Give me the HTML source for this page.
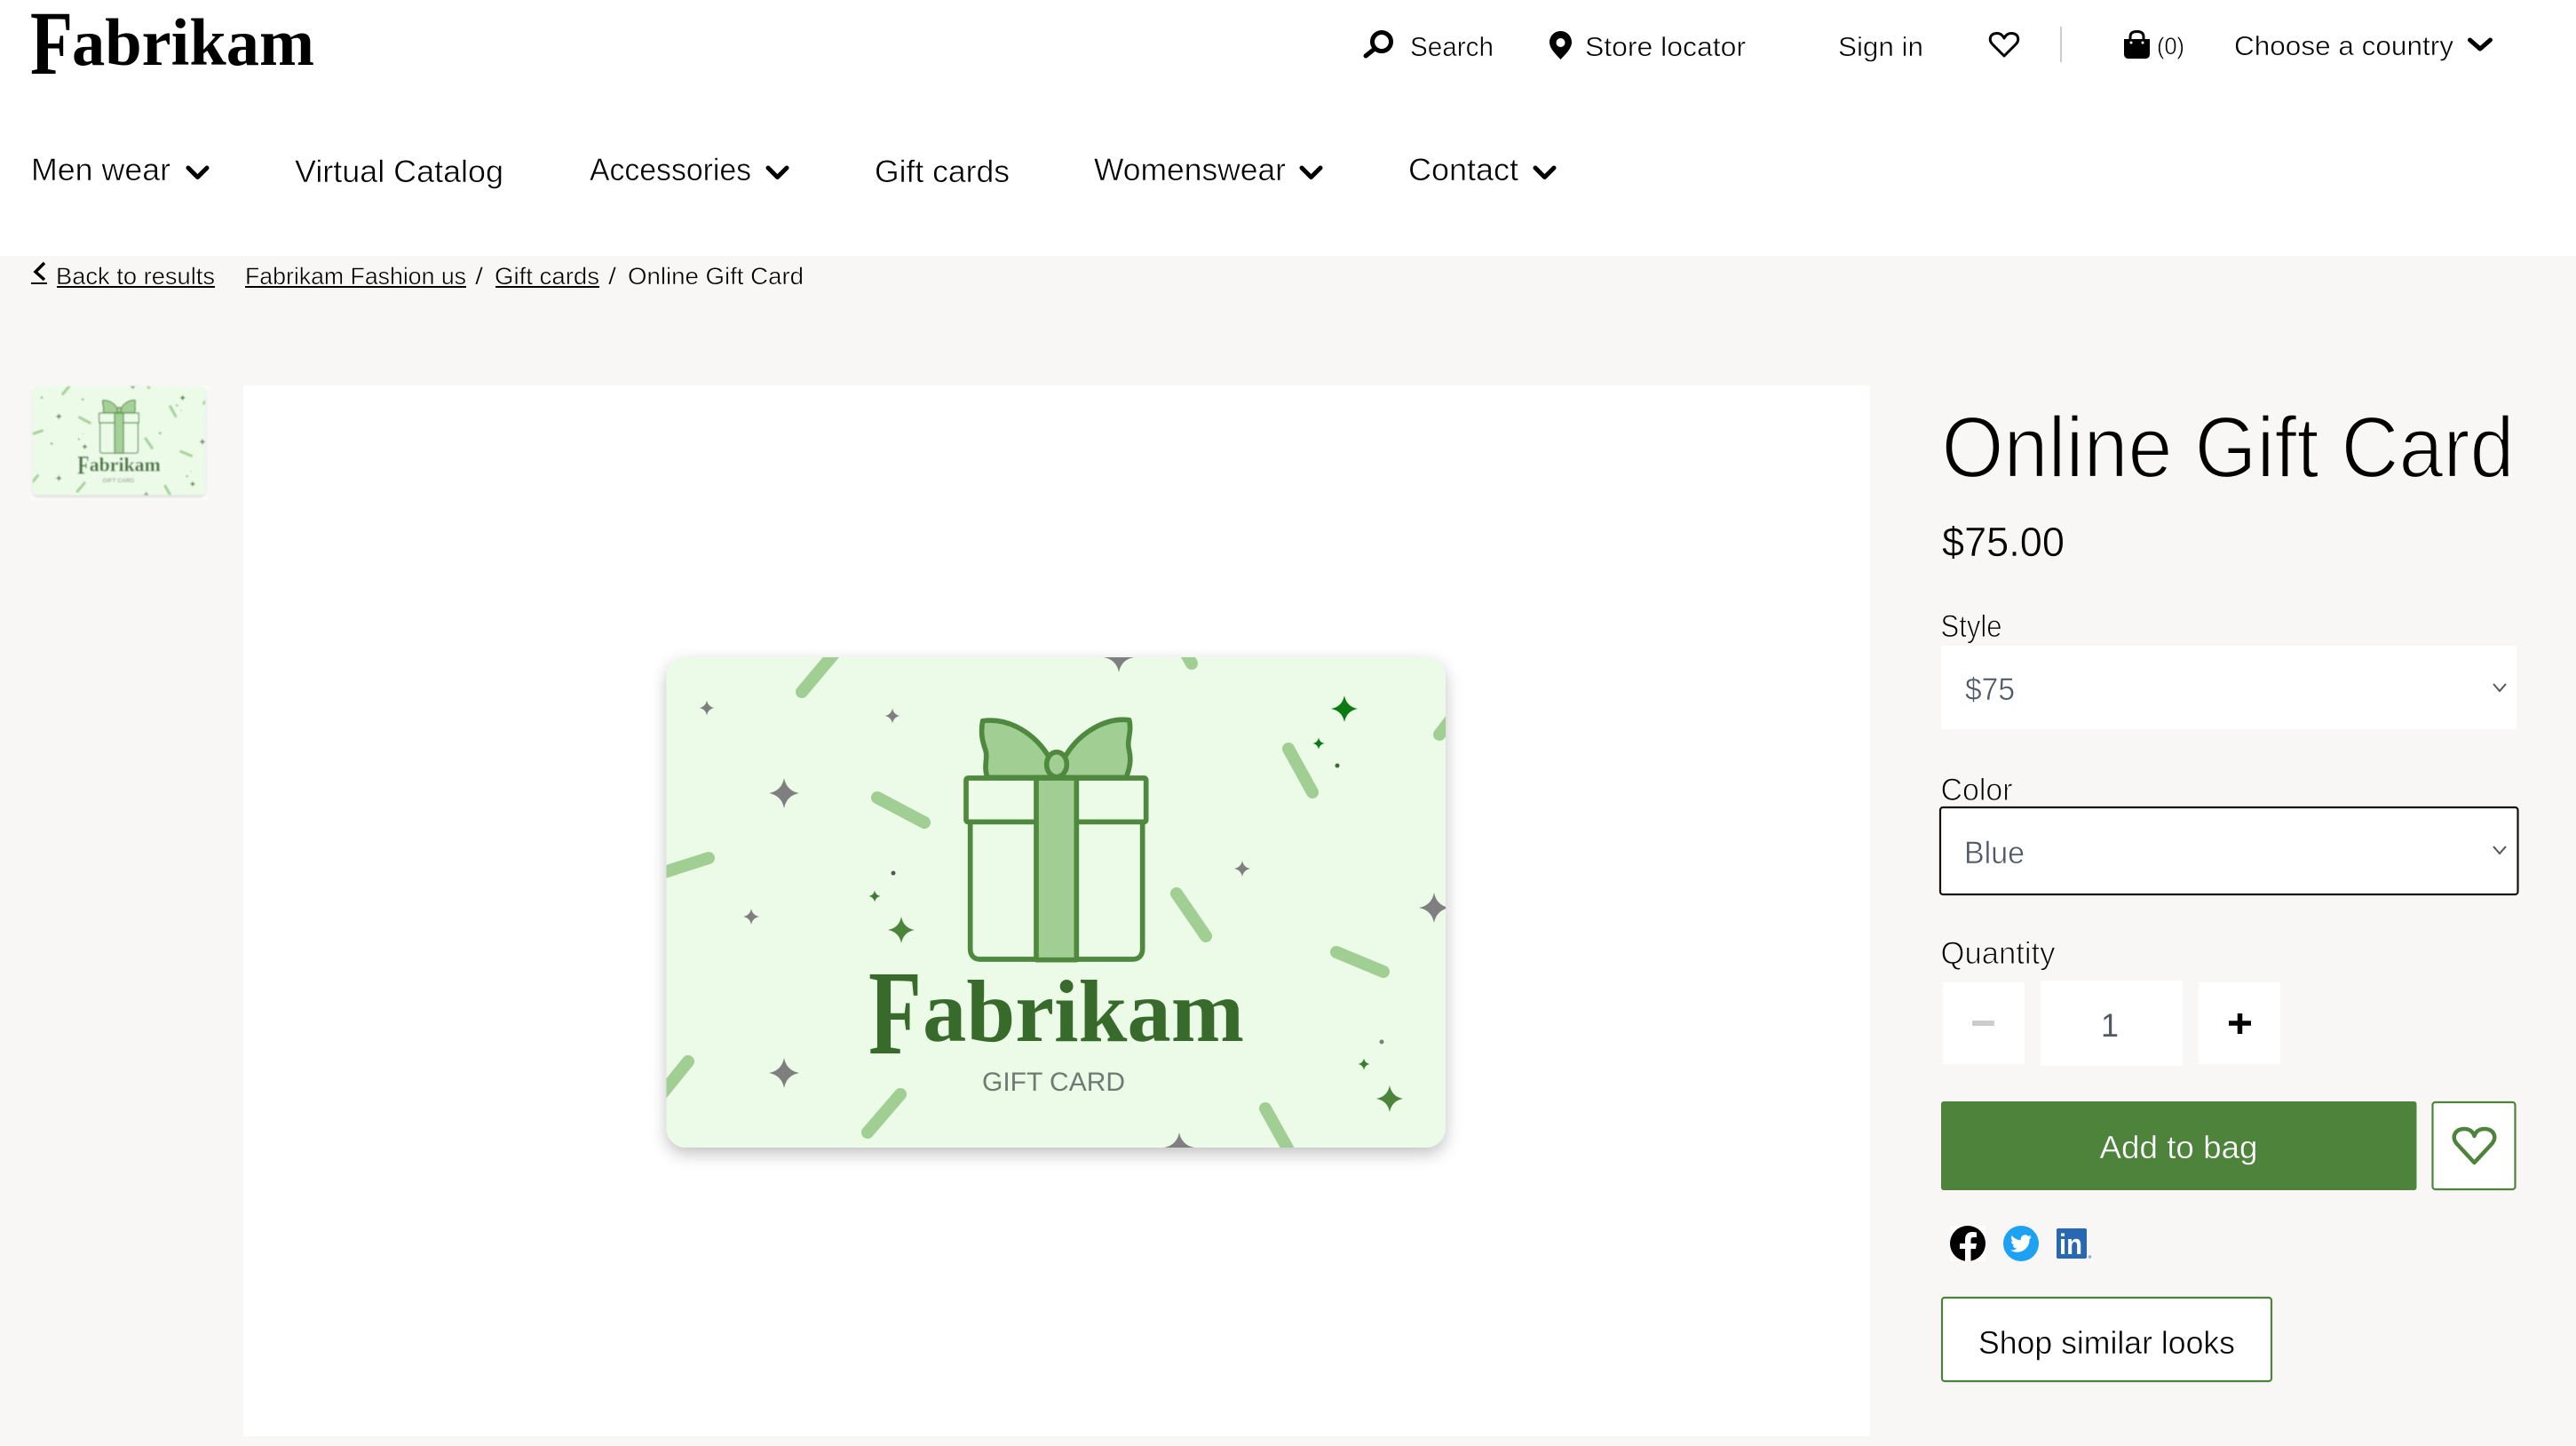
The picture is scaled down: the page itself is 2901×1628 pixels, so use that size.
<!DOCTYPE html>
<html lang="en"><head><meta charset="utf-8"><title>Online Gift Card</title>
<style>
html,body{margin:0;padding:0;background:#fff;width:2901px;height:1628px;overflow:hidden}
svg{display:block}
text{font-family:"Liberation Sans",Arial,sans-serif;fill:#000;white-space:pre}
.w{stroke:#fff;stroke-width:.55}
.b{stroke:#f8f7f6;stroke-width:.5}
.bl{stroke:#f8f7f6;stroke-width:1}
.n{font-size:35px}
.h{font-size:31px}
.c{font-size:27px}
.l{font-size:35px}
.serif{font-family:"Liberation Serif","Times New Roman",serif;font-weight:bold}
</style></head>
<body>
<svg xmlns="http://www.w3.org/2000/svg" width="2901" height="1628" viewBox="0 0 2901 1628">
<defs>
<path id="s" d="M0-1Q.16-.16 1 0Q.16 .16 0 1Q-.16 .16-1 0Q-.16-.16 0-1Z"/>
<clipPath id="cc"><rect x="750.5" y="740" width="877.5" height="552" rx="22"/></clipPath>
<filter id="sh" x="-10%" y="-10%" width="120%" height="125%"><feDropShadow dx="0" dy="7" stdDeviation="9" flood-color="#000" flood-opacity=".24"/></filter>
<filter id="bl"><feGaussianBlur stdDeviation=".8"/></filter>
<g id="card">
<rect x="750.5" y="740" width="877.5" height="552" rx="22" fill="#ebfbe8" filter="url(#sh)"/>
<g clip-path="url(#cc)">
<g stroke="#a1cf93" stroke-width="14" stroke-linecap="round" fill="none">
<path d="M940 735L903 779"/><path d="M1334 733L1342 747"/><path d="M1451 843L1478 892"/><path d="M1634 810L1621 827"/>
<path d="M988 898L1041 926"/><path d="M798 966L745 983"/><path d="M1325 1006L1358 1054"/><path d="M1505 1072L1558 1094"/>
<path d="M775 1195L745 1232"/><path d="M1014 1232L977 1275"/><path d="M1425 1248L1454 1300"/>
</g>
<g fill="#7f7f7f">
<use href="#s" transform="translate(796 797) scale(8.5)"/><use href="#s" transform="translate(1005 806) scale(8.5)"/>
<use href="#s" transform="translate(883 893) scale(17)"/><use href="#s" transform="translate(1260 740) scale(17)"/>
<use href="#s" transform="translate(1399 978) scale(9)"/><use href="#s" transform="translate(1615 1022) scale(17)"/>
<use href="#s" transform="translate(846 1032) scale(9)"/><use href="#s" transform="translate(883 1208) scale(17)"/>
<use href="#s" transform="translate(1328 1292) scale(17)"/>
<circle cx="1556" cy="1173" r="2.5"/><circle cx="1006" cy="983" r="2.5" fill="#555"/>
</g>
<use href="#s" fill="#0b7a12" transform="translate(1514 798) scale(15)"/>
<use href="#s" fill="#0b7a12" transform="translate(1485 837) scale(6.5)"/>
<circle cx="1506" cy="862" r="2.5" fill="#3a6a3a"/>
<use href="#s" fill="#3f7a35" transform="translate(985 1009) scale(6.5)"/>
<use href="#s" fill="#4c843c" transform="translate(1015 1047) scale(15)"/>
<use href="#s" fill="#3f7a35" transform="translate(1536 1198) scale(6.5)"/>
<use href="#s" fill="#4c843c" transform="translate(1565 1237) scale(15)"/>
</g>
<g transform="translate(950 770) scale(.33333)" stroke="#4f883f" stroke-width="17" stroke-linejoin="round">
<path fill="#a1cf93" d="M486 316C472 280 488 250 480 225C470 195 462 170 470 125C560 112 650 170 697 252L745 252C790 170 880 112 965 122C975 165 955 190 965 225C972 255 968 280 955 316Z"/>
<ellipse cx="720" cy="272" rx="34" ry="42" fill="#a1cf93"/>
<path d="M428 466V895C428 918 442 930 462 930H976C996 930 1010 918 1010 895V466Z" fill="#ebfbe8"/>
<rect x="414" y="318" width="608" height="148" rx="6" fill="#ebfbe8"/>
<rect x="651" y="318" width="136" height="614" fill="#a1cf93"/>
</g>
<text class="serif" y="1186" style="fill:#386b2b"><tspan x="978" y="1186" font-size="136" textLength="60" lengthAdjust="spacingAndGlyphs">F</tspan><tspan x="1039" y="1172" font-size="100" textLength="362" lengthAdjust="spacingAndGlyphs">abrikam</tspan></text>
<text x="1106" y="1228" font-size="30" textLength="161" lengthAdjust="spacingAndGlyphs" style="fill:#6f7a72">GIFT CARD</text>
</g>
</defs>

<!-- page bg -->
<rect x="0" y="288" width="2901" height="1340" fill="#f8f7f6"/>

<!-- logo -->
<text class="serif"><tspan x="34" y="83" font-size="103" textLength="48" lengthAdjust="spacingAndGlyphs">F</tspan><tspan x="81" y="73" font-size="75" textLength="273" lengthAdjust="spacingAndGlyphs">abrikam</tspan></text>

<!-- top utility -->
<g fill="none" stroke="#000">
<circle cx="1556" cy="47" r="10.5" stroke-width="5"/>
<path d="M1548 55L1538 63" stroke-width="5" stroke-linecap="round"/>
</g>
<text class="h w" x="1588" y="63" textLength="94" lengthAdjust="spacingAndGlyphs">Search</text>
<path d="M1757.500 35C1750 35 1745 41 1745 47.500C1745 55 1753 62 1757.500 67C1762 62 1770 55 1770 47.500C1770 41 1765 35 1757.500 35Z"/>
<circle cx="1757.500" cy="48" r="5" fill="#fff"/>
<text class="h w" x="1785" y="63" textLength="181" lengthAdjust="spacingAndGlyphs">Store locator</text>
<text class="h w" x="2070" y="63" textLength="96" lengthAdjust="spacingAndGlyphs">Sign in</text>
<path d="M2257 63L2244 50C2239 45 2241 37.500 2249 37.500C2253 37.500 2255.500 40 2257 43C2258.500 40 2261 37.500 2265 37.500C2273 37.500 2275 45 2270 50Z" fill="none" stroke="#000" stroke-width="3" stroke-linejoin="round"/>
<rect x="2320" y="30" width="2" height="40" fill="#ccc"/>
<path d="M2399 48V41.500C2399 37 2402 35.500 2406.500 35.500C2411 35.500 2414 37 2414 41.500V48" fill="none" stroke="#000" stroke-width="3"/>
<path d="M2392 44H2421V61C2421 64 2419 66 2416 66H2397C2394 66 2392 64 2392 61Z"/>
<circle cx="2400" cy="48" r="1.500" fill="#fff"/><circle cx="2413" cy="48" r="1.500" fill="#fff"/>
<text x="2429" y="61" font-size="27" textLength="31" lengthAdjust="spacingAndGlyphs" class="w">(0)</text>
<text class="h w" x="2516" y="62" textLength="247" lengthAdjust="spacingAndGlyphs">Choose a country</text>
<path d="M2781.500 45L2793 55L2804.500 45" fill="none" stroke="#000" stroke-width="5" stroke-linecap="round" stroke-linejoin="round"/>

<!-- nav -->
<text class="n w" x="35" y="203" textLength="157" lengthAdjust="spacingAndGlyphs">Men wear</text>
<path d="M212 189L222.500 199.500L233 189" fill="none" stroke="#000" stroke-width="5" stroke-linecap="round" stroke-linejoin="round"/>
<text class="n w" x="332" y="205" textLength="235" lengthAdjust="spacingAndGlyphs">Virtual Catalog</text>
<text class="n w" x="664" y="203" textLength="182" lengthAdjust="spacingAndGlyphs">Accessories</text>
<path d="M865 189L875.500 199.500L886 189" fill="none" stroke="#000" stroke-width="5" stroke-linecap="round" stroke-linejoin="round"/>
<text class="n w" x="985" y="205" textLength="152" lengthAdjust="spacingAndGlyphs">Gift cards</text>
<text class="n w" x="1232" y="203" textLength="216" lengthAdjust="spacingAndGlyphs">Womenswear</text>
<path d="M1466 189L1476.500 199.500L1487 189" fill="none" stroke="#000" stroke-width="5" stroke-linecap="round" stroke-linejoin="round"/>
<text class="n w" x="1586" y="203" textLength="124" lengthAdjust="spacingAndGlyphs">Contact</text>
<path d="M1729 189L1739.500 199.500L1750 189" fill="none" stroke="#000" stroke-width="5" stroke-linecap="round" stroke-linejoin="round"/>

<!-- breadcrumb -->
<path d="M50 296L40 306L50 315" fill="none" stroke="#000" stroke-width="3.500"/>
<rect x="35" y="318" width="18" height="2"/>
<text class="c b" x="63" y="320" textLength="179" lengthAdjust="spacingAndGlyphs">Back to results</text>
<rect x="64" y="322" width="178" height="2"/>
<text class="c b" x="276" y="320" textLength="249" lengthAdjust="spacingAndGlyphs">Fabrikam Fashion us</text>
<rect x="276" y="322" width="249" height="2"/>
<text class="c b" x="535" y="320" textLength="9" lengthAdjust="spacingAndGlyphs">/</text>
<text class="c b" x="557" y="320" textLength="118" lengthAdjust="spacingAndGlyphs">Gift cards</text>
<rect x="558" y="322" width="117" height="2"/>
<text class="c b" x="685" y="320" textLength="9" lengthAdjust="spacingAndGlyphs">/</text>
<text class="c b" x="707" y="320" textLength="198" lengthAdjust="spacingAndGlyphs">Online Gift Card</text>

<!-- thumbnail -->
<rect x="34" y="434" width="200" height="129" fill="#fbfbfa"/>
<g filter="url(#bl)" opacity=".95"><use href="#card" transform="translate(37 435) scale(.221) translate(-750.5 -740)"/></g>

<!-- main media -->
<rect x="274" y="434" width="1832" height="1183" fill="#fff"/>
<use href="#card"/>

<!-- buy box -->
<text x="2186.500" y="537" font-size="97" textLength="645" lengthAdjust="spacingAndGlyphs" style="stroke:#f8f7f6;stroke-width:2.2">Online Gift Card</text>
<text x="2187" y="626" font-size="46" textLength="138" lengthAdjust="spacingAndGlyphs" class="b">$75.00</text>

<text class="l bl" x="2185.500" y="717" textLength="69" lengthAdjust="spacingAndGlyphs">Style</text>
<rect x="2186" y="727" width="648" height="94" fill="#fff"/>
<text class="l w" x="2213" y="788" textLength="56" lengthAdjust="spacingAndGlyphs" style="fill:#4f5a66">$75</text>
<path d="M2808 770L2815 778L2822 770" fill="none" stroke="#555" stroke-width="2"/>

<text class="l bl" x="2185.500" y="901" textLength="81" lengthAdjust="spacingAndGlyphs">Color</text>
<rect x="2185" y="909" width="650.500" height="98" rx="3" fill="#fff" stroke="#111" stroke-width="2.200"/>
<text class="l w" x="2212" y="972" textLength="68" lengthAdjust="spacingAndGlyphs" style="fill:#4f5a66">Blue</text>
<path d="M2808 953L2815 961L2822 953" fill="none" stroke="#555" stroke-width="2"/>

<text class="l bl" x="2185.500" y="1085" textLength="129" lengthAdjust="spacingAndGlyphs">Quantity</text>
<rect x="2188" y="1106" width="92" height="92" fill="#fff"/>
<rect x="2221" y="1149" width="25" height="6" rx="1" fill="#ccc"/>
<rect x="2298" y="1104" width="160" height="96" fill="#fff"/>
<text x="2366" y="1167" font-size="37" textLength="20" lengthAdjust="spacingAndGlyphs" style="fill:#4f5a66">1</text>
<rect x="2476" y="1106" width="92" height="92" fill="#fff"/>
<path d="M2510 1152H2535M2522.500 1141V1164" stroke="#000" stroke-width="5.500" fill="none"/>

<rect x="2186" y="1240" width="535.500" height="100" rx="3" fill="#4d833b"/>
<text x="2364.500" y="1304" font-size="36" textLength="178" lengthAdjust="spacingAndGlyphs" style="fill:#fff;stroke:#4d833b;stroke-width:.4">Add to bag</text>
<rect x="2739.500" y="1241" width="93" height="98" rx="3" fill="#fff" stroke="#4d833b" stroke-width="2.200"/>
<path d="M2786.500 1309L2767 1288C2760 1280 2765 1271 2775 1271C2781 1271 2785 1274 2786.500 1279C2788 1274 2792 1271 2798 1271C2808 1271 2813 1280 2806 1288Z" fill="none" stroke="#4d833b" stroke-width="4.500" stroke-linejoin="round"/>

<!-- social -->
<rect x="2196" y="1380" width="40" height="40" fill="#fff"/>
<circle cx="2216" cy="1400" r="20" fill="#000"/>
<path d="M2219.500 1420V1406H2225L2226 1400H2219.500V1396C2219.500 1394 2220.500 1393 2223 1393H2226V1387.500C2224 1387.200 2222.500 1387 2221 1387C2216 1387 2213 1390 2213 1395.500V1400H2207V1406H2213V1420Z" fill="#fff"/>
<circle cx="2276" cy="1400" r="20" fill="#1da1f2"/>
<path transform="translate(2264 1388)" fill="#fff" d="M23.950 4.570a10 10 0 01-2.820.770 4.960 4.960 0 002.160-2.720c-.950.550-2 .950-3.120 1.180a4.920 4.920 0 00-8.380 4.480C7.690 8.090 4.070 6.130 1.640 3.160a4.920 4.920 0 001.520 6.570 4.900 4.900 0 01-2.230-.610v.060a4.920 4.920 0 003.950 4.830 5 5 0 01-2.220.080 4.930 4.930 0 004.600 3.420A9.870 9.870 0 010 19.540a13.940 13.940 0 007.550 2.210c9.050 0 14-7.500 14-14 0-.210 0-.420-.020-.630a9.940 9.940 0 002.460-2.550z"/>
<rect x="2316" y="1383" width="34" height="34" rx="2" fill="#2867b2"/>
<text x="2319" y="1412" font-size="32" font-weight="bold" textLength="26" lengthAdjust="spacingAndGlyphs" style="fill:#fff">in</text>
<circle cx="2353.500" cy="1415" r="1.800" fill="#8ab0dd"/>

<rect x="2187" y="1461" width="371" height="94" rx="3" fill="#fff" stroke="#4d833b" stroke-width="2.200"/>
<text x="2228" y="1524" font-size="36" textLength="289" lengthAdjust="spacingAndGlyphs" class="w">Shop similar looks</text>
</svg>
</body></html>
